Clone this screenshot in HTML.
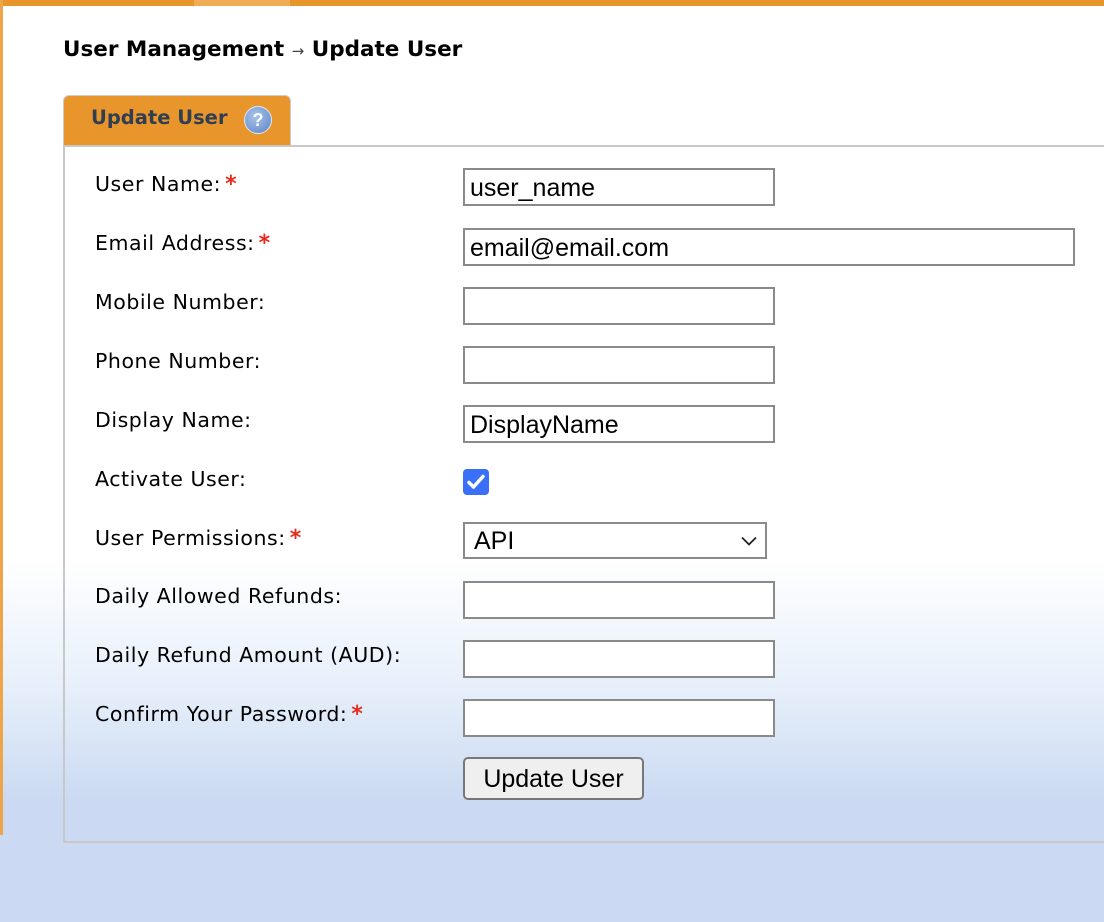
<!DOCTYPE html>
<html><head><style>
html,body{margin:0;padding:0}
body{width:1104px;height:922px;position:relative;overflow:hidden;
background:linear-gradient(to bottom,#fff 0,#fff 560px,#e6effa 690px,#cbdaf2 800px,#cbdaf2 922px);
font-family:"DejaVu Sans","Liberation Sans",sans-serif;}
.top{position:absolute;left:0;top:0;width:1104px;height:6px;background:#e8952b}
.top2{position:absolute;left:194px;top:0;width:96px;height:6px;background:#f0ad55}
.left{position:absolute;left:0;top:0;width:3px;height:835px;background:#eea448}
h1{position:absolute;left:63px;top:37px;margin:0;font-size:21.5px;font-weight:bold;color:#000;white-space:nowrap}
h1 .ar{font-weight:normal;color:#444;font-size:15px}
.tab{position:absolute;left:63px;top:95px;width:228px;height:50px;background:#e8952b;border:1px solid #ccc;border-bottom:none;border-radius:6px 6px 0 0;box-sizing:border-box}
.tab span{position:absolute;left:27px;top:10px;font-size:19.5px;font-weight:bold;color:#2f3e52}
.help{position:absolute;left:180px;top:10px;width:28px;height:28px;border-radius:50%;background:radial-gradient(circle at 40% 35%,#a9c4ea,#5a83c4);border:1px solid #dfe8f4;box-sizing:border-box;color:#fff;font:bold 18px "Liberation Sans",sans-serif;text-align:center;line-height:26px}
.panel{position:absolute;left:63px;top:145px;width:1060px;height:698px;border:2px solid #c8c8c8;border-right:none;box-sizing:border-box}
.lab{position:absolute;left:95px;font-size:20.5px;letter-spacing:0.55px;color:#000;white-space:nowrap;line-height:24px}
.lab b{color:#e8291c;font-size:22px;margin-left:4px}
.in{position:absolute;left:463px;width:312px;height:38px;border:2px solid #8a8a8a;background:#fff;box-sizing:border-box;font:25px "Liberation Sans",sans-serif;padding-left:5px;line-height:36px}
.cb{position:absolute;left:463px;top:469px;width:26px;height:26px;border-radius:4px;background:#3a6ff7}
.sel{position:absolute;left:463px;top:522px;width:304px;height:37px;border:2px solid #8a8a8a;background:#fff;box-sizing:border-box;font:25px "Liberation Sans",sans-serif;padding-left:9px;line-height:35px}
.btn{position:absolute;left:463px;top:757px;width:181px;height:43px;border:2px solid #777;border-radius:5px;background:#efefef;box-sizing:border-box;font:25px "Liberation Sans",sans-serif;text-align:center;line-height:40px}
</style></head><body>
<div class="top"></div><div class="top2"></div><div class="left"></div>
<h1>User Management <span class="ar">&#8594;</span> Update User</h1>
<div class="tab"><span>Update User</span><div class="help">?</div></div>
<div class="panel"></div>
<div class="lab" style="top:172px">User Name:<b>*</b></div>
<div class="lab" style="top:231px">Email Address:<b>*</b></div>
<div class="lab" style="top:290px">Mobile Number:</div>
<div class="lab" style="top:349px">Phone Number:</div>
<div class="lab" style="top:408px">Display Name:</div>
<div class="lab" style="top:467px">Activate User:</div>
<div class="lab" style="top:526px">User Permissions:<b>*</b></div>
<div class="lab" style="top:584px">Daily Allowed Refunds:</div>
<div class="lab" style="top:643px">Daily Refund Amount (AUD):</div>
<div class="lab" style="top:702px">Confirm Your Password:<b>*</b></div>
<div class="in" style="top:168px">user_name</div>
<div class="in" style="top:228px;width:612px">email@email.com</div>
<div class="in" style="top:287px"></div>
<div class="in" style="top:346px"></div>
<div class="in" style="top:405px">DisplayName</div>
<div class="cb"><svg width="26" height="26" viewBox="0 0 26 26"><path d="M6 13.5l4.5 4.5L20 7.5" fill="none" stroke="#fff" stroke-width="3.5" stroke-linecap="round" stroke-linejoin="round"/></svg></div>
<div class="sel">API<svg style="position:absolute;right:8px;top:12px" width="16" height="10" viewBox="0 0 16 10"><path d="M1 1.5l7 7 7-7" fill="none" stroke="#222" stroke-width="1.8"/></svg></div>
<div class="in" style="top:581px"></div>
<div class="in" style="top:640px"></div>
<div class="in" style="top:699px"></div>
<div class="btn">Update User</div>
</body></html>
